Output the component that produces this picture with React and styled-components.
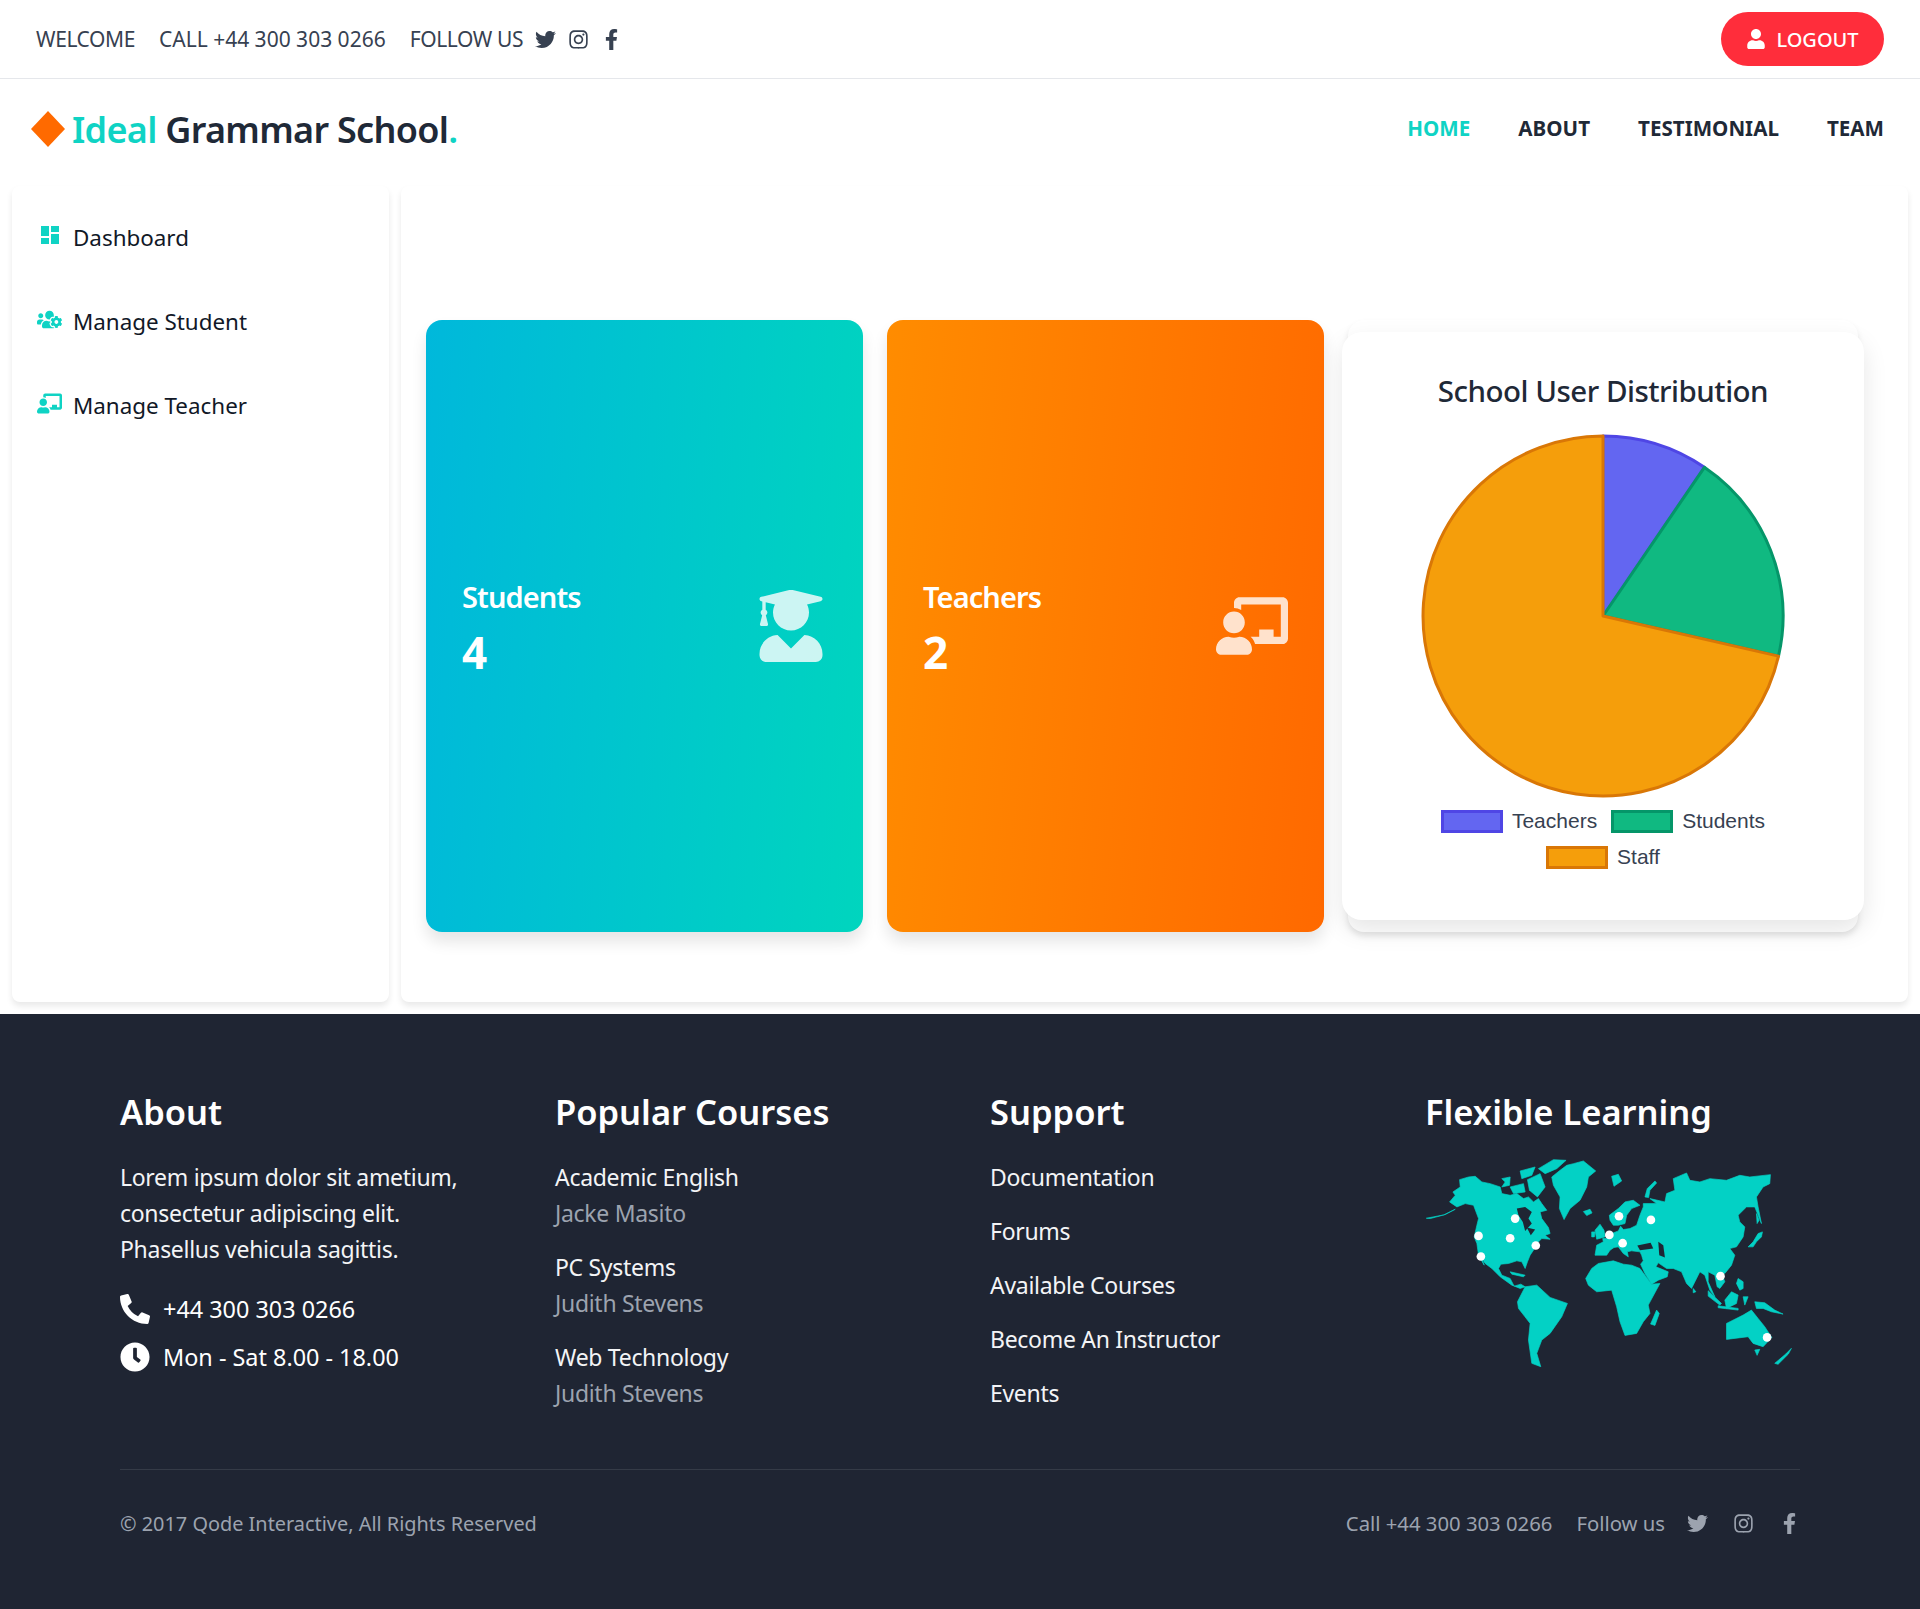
import React from 'react';
import styled, { createGlobalStyle } from 'styled-components';
import { FaTwitter, FaInstagram, FaFacebookF, FaUser, FaUsersCog, FaChalkboardTeacher, FaUserGraduate, FaPhoneAlt, FaClock } from 'react-icons/fa';
import { MdDashboard } from 'react-icons/md';

const teal = '#0fd3c4';
const dark = '#1f2533';
const FONT = `"Noto Sans", "Open Sans", sans-serif`;

const GlobalStyle = createGlobalStyle`
	* { box-sizing: border-box; }
	body { margin: 0; background: #fff; font-family: ${FONT}; color: #1f2937; }
`;

const Page = styled.div`
	width: 1920px;
	height: 1609px;
	overflow: hidden;
`;

const TopBar = styled.div`
	height: 79px;
	border-bottom: 1px solid #e5e7eb;
	padding: 0 36px;
	display: flex;
	align-items: center;
	justify-content: space-between;
`;

const TopLeft = styled.div`
	display: flex;
	align-items: center;
	gap: 24px;
	font-size: 21px;
	color: #374151;
`;

const TopWord = styled.span`
	letter-spacing: -0.4px;
`;

const Follow = styled.div`
	display: flex;
	align-items: center;
	gap: 12px;
	svg { display: block; }
`;

const LogoutButton = styled.button`
	width: 163px;
	height: 54px;
	border: 0;
	border-radius: 27px;
	background: #ff2d3b;
	color: #fff;
	font: 500 20px ${FONT};
	display: flex;
	align-items: center;
	justify-content: center;
	gap: 10px;
`;

const NavBar = styled.div`
	height: 107px;
	padding: 0 36px 5px 31px;
	display: flex;
	align-items: center;
	justify-content: space-between;
`;

const Brand = styled.div`
	display: flex;
	align-items: center;
	gap: 7px;
	margin-top: -2px;
	font-size: 36px;
	font-weight: 600;
	letter-spacing: -0.7px;
	color: #1f2937;
	span { color: ${teal}; }
	svg { margin-top: -1px; }
`;

const NavLinks = styled.nav`
	display: flex;
	gap: 48px;
	margin-top: -4px;
`;

const NavLink = styled.a`
	font-size: 20.6px;
	font-weight: 700;
	color: ${p => (p.$active ? teal : '#1f2937')};
`;

const Dashboard = styled.div`
	padding: 0 12px;
	display: flex;
	gap: 12px;
`;

const Panel = styled.div`
	height: 816px;
	background: #fff;
	border-radius: 8px;
	box-shadow: 0 4px 6px rgba(0, 0, 0, 0.09);
`;

const Sidebar = styled(Panel)`
	width: 377px;
	padding-top: 9px;
`;

const SideItem = styled.div`
	height: 84px;
	padding-left: 25px;
	display: flex;
	align-items: center;
	gap: 11px;
	font-size: 22.4px;
	color: #111827;
`;

const SideIcon = styled.span`
	width: 25px;
	color: ${teal};
	display: flex;
	justify-content: center;
	margin-top: -4px;
`;

const Main = styled(Panel)`
	flex: 1;
	padding: 134px 0 0 25px;
	display: grid;
	grid-template-columns: 437px 437px 510px;
	grid-template-rows: 612px;
	gap: 24px;
`;

const StatCard = styled.div`
	border-radius: 16px;
	padding: 0 36px;
	background: ${p => p.$bg};
	box-shadow: 0 10px 15px rgba(0, 0, 0, 0.1);
	color: #fff;
	display: flex;
	align-items: center;
	justify-content: space-between;
	svg { opacity: 0.8; display: block; }
`;

const StatText = styled.div`
	margin-top: 6.5px;
`;

const StatLabel = styled.div`
	font-size: 29px;
	font-weight: 600;
	letter-spacing: -0.9px;
	line-height: 40px;
`;

const StatValue = styled.div`
	font-size: 44px;
	font-weight: 700;
	line-height: 60px;
	margin-top: 4.5px;
`;

const ChartSlot = styled.div`
	position: relative;
	background: #fff;
	border-radius: 16px;
	box-shadow: 0 4px 6px rgba(0, 0, 0, 0.1);
`;

const ChartCard = styled.div`
	position: absolute;
	top: 12px;
	bottom: 12px;
	left: -6px;
	right: -6px;
	background: #fff;
	border-radius: 20px;
	box-shadow: 0 10px 25px rgba(0, 0, 0, 0.1);
	padding-top: 37px;
	display: flex;
	flex-direction: column;
	align-items: center;
`;

const ChartTitle = styled.h3`
	margin: 0;
	font-size: 29.5px;
	font-weight: 500;
	line-height: 44px;
	letter-spacing: -0.5px;
	color: #1f2937;
`;

const PieSvg = styled.svg`
	display: block;
	margin-top: 20px;
`;

const Legend = styled.div`
	width: 400px;
	margin-top: 4px;
	display: flex;
	flex-wrap: wrap;
	justify-content: center;
	column-gap: 14px;
	font: 21px/36px "Liberation Sans", Arial, sans-serif;
	color: #374151;
`;

const LegendItem = styled.div`
	display: flex;
	align-items: center;
	gap: 9px;
`;

const Swatch = styled.i`
	width: 62px;
	height: 23px;
	background: ${p => p.$fill};
	border: 3px solid ${p => p.$line};
`;

const Footer = styled.footer`
	margin-top: 12px;
	height: 595px;
	background: ${dark};
	padding: 72px 120px 0;
	color: #fff;
`;

const Columns = styled.div`
	display: grid;
	grid-template-columns: repeat(4, 375px);
	gap: 60px;
	height: 384px;
	border-bottom: 1px solid rgba(255, 255, 255, 0.1);
`;

const ColumnTitle = styled.h4`
	margin: 0 0 21px;
	font-size: 34.5px;
	font-weight: 600;
	line-height: 52px;
`;

const Text = styled.div`
	font-size: 23px;
	line-height: 36px;
	letter-spacing: -0.3px;
	color: ${p => (p.$muted ? '#9ca3af' : '#f3f4f6')};
`;

const ContactRow = styled.div`
	display: flex;
	align-items: center;
	gap: 13px;
	height: 48px;
	font-size: 23.4px;
	svg { display: block; }
`;

const Contacts = styled.div`
	margin-top: 18px;
`;

const Course = styled.div`
	margin-bottom: 18px;
`;

const SupportLink = styled(Text)`
	height: 54px;
`;

const MapSvg = styled.svg`
	display: block;
	margin-top: -2px;
`;

const Bottom = styled.div`
	height: 106px;
	display: flex;
	align-items: center;
	justify-content: space-between;
	font-size: 19.9px;
	color: #9ca3af;
`;

const BottomRight = styled.div`
	display: flex;
	align-items: center;
	gap: 24px;
	font-size: 20.3px;
`;

const BottomIcons = styled.div`
	display: flex;
	align-items: center;
	gap: 25px;
	margin-left: -2px;
	svg { display: block; }
`;

const pieSlices = [
	{ d: 'M183 183 L183 3 A180 180 0 0 1 284.4 34.3 Z', fill: '#6366f1', line: '#4f46e5' },
	{ d: 'M183 183 L284.4 34.3 A180 180 0 0 1 358.5 223.1 Z', fill: '#10b981', line: '#059669' },
	{ d: 'M183 183 L358.5 223.1 A180 180 0 1 1 183 3 Z', fill: '#f59e0b', line: '#d97706' }
];

const legendRows = [
	{ label: 'Teachers', fill: '#6366f1', line: '#4f46e5' },
	{ label: 'Students', fill: '#10b981', line: '#059669' },
	{ label: 'Staff', fill: '#f59e0b', line: '#d97706' }
];

const courses = [
	{ name: 'Academic English', by: 'Jacke Masito' },
	{ name: 'PC Systems', by: 'Judith Stevens' },
	{ name: 'Web Technology', by: 'Judith Stevens' }
];

const supportLinks = ['Documentation', 'Forums', 'Available Courses', 'Become An Instructor', 'Events'];

// traced by eye from the footer map, in a 3x coordinate space
const land = [
	'48,234 100,224 135,207 105,223 60,235',
	'118,185 135,165 128,155 150,140 148,118 175,110 195,108 215,125 240,130 270,140 275,160 300,165 320,160 340,175 355,170 370,185 385,175 395,190 410,210 390,215 395,235 415,262 420,280 405,285 420,297 395,295 380,310 370,330 360,345 352,365 345,385 335,365 320,362 295,370 272,372 265,385 275,405 300,415 312,438 332,432 345,440 330,445 305,435 270,410 245,385 225,370 215,355 222,375 205,345 200,310 192,290 200,255 205,235 190,195 165,190 140,200',
	'275,115 300,110 298,135 275,140 285,125',
	'300,140 340,130 345,155 310,160',
	'330,92 375,80 365,105 335,115',
	'352,118 390,100 405,140 382,170 358,150',
	'385,85 430,58 468,60 440,85 405,100',
	'300,395 345,405 340,410 305,402',
	'425,110 450,90 470,75 490,70 520,62 557,92 535,110 530,140 510,180 480,205 462,238 448,205 450,170 430,135',
	'520,214 540,207 546,218 530,226',
	'555,270 570,252 582,270 585,290 560,297',
	'545,275 555,275 553,290 545,290',
	'605,108 625,102 635,122 612,138',
	'705,170 712,145 735,122 740,128 720,150 716,172',
	'600,240 598,225 625,205 645,185 670,180 690,195 665,205 650,225 645,250 625,255 610,255',
	'555,345 560,315 580,305 578,295 598,295 605,280 625,272 632,258 640,268 660,265 680,255 690,225 700,200 700,190 740,190 720,175 765,185 770,160 795,150 790,115 830,98 840,120 870,125 900,115 950,120 990,105 1020,110 1082,103 1080,130 1060,140 1040,170 1045,200 1055,250 1035,200 1010,200 985,225 990,245 1005,260 1000,290 980,320 960,325 975,345 965,375 945,400 935,398 945,425 930,445 922,440 915,405 895,395 895,425 915,470 900,450 885,405 870,395 845,445 830,430 815,395 790,385 770,385 745,368 738,380 775,395 772,410 745,420 725,432 705,400 692,372 700,362 695,345 690,335 665,332 652,335 655,350 640,340 625,320 612,322 600,330 590,345 570,345',
	'527,415 545,385 565,370 610,362 640,372 665,375 690,385 725,432 750,430 715,495 720,520 700,545 680,580 645,586 630,545 620,500 605,450 560,455 535,435',
	'322,485 345,440 380,435 420,472 472,490 455,530 420,580 395,600 380,640 392,680 365,670 355,600 360,550 325,505',
	'950,550 1000,525 1025,510 1045,535 1065,560 1086,592 1060,620 1030,610 1015,590 950,598',
	'722,552 740,510 748,520 735,556',
	'1035,630 1050,628 1042,646',
	'1095,670 1128,642 1145,625 1136,642 1105,673',
	'1015,320 1030,305 1045,280 1058,275 1055,290 1040,305 1030,320',
	'1040,220 1048,240 1042,250',
	'850,445 858,455 850,458',
	'895,452 935,490 930,495 895,468',
	'945,480 965,455 985,465 980,490 950,505',
	'925,497 985,505 985,510 925,503',
	'1000,470 1015,470 1005,495',
	'1035,485 1065,488 1095,510 1120,522 1085,515 1060,505 1040,505',
	'985,415 1000,425 1000,445 990,450 980,430'
];

const water = [
	'320,205 345,200 365,215 355,235 365,250 345,272 338,245 325,225',
	'350,262 375,268 362,285',
	'682,316 722,308 730,325 690,330',
	'745,305 760,315 765,352 748,345'
];

const cities = [[315, 235], [205, 287], [300, 294], [377, 316], [212, 349], [627, 228], [723, 239], [598, 284], [638, 309], [932, 408], [1072, 592]];

const WorldMap = () => (
	<MapSvg width='375' height='213' viewBox='45 50 1125 640'>
		{land.map(points => <polygon key={points} points={points} fill='#03d1c5' stroke='#03d1c5' strokeWidth='2' strokeLinejoin='round' />)}
		{water.map(points => <polygon key={points} points={points} fill={dark} />)}
		{cities.map(([x, y]) => <circle key={x} cx={x} cy={y} r='13' fill='#fff' />)}
	</MapSvg>
);

export default function App() {
	return (
		<Page>
			<GlobalStyle />
			<TopBar>
				<TopLeft>
					<TopWord>WELCOME</TopWord>
					<span>CALL +44 300 303 0266</span>
					<Follow>
						<TopWord>FOLLOW US</TopWord>
						<FaTwitter size={21} />
						<FaInstagram size={21} />
						<FaFacebookF size={21} />
					</Follow>
				</TopLeft>
				<LogoutButton><FaUser size={20} />LOGOUT</LogoutButton>
			</TopBar>
			<NavBar>
				<Brand>
					<svg width='34' height='36' viewBox='0 0 34 36'><polygon points='17,0 34,18 17,36 0,18' fill='#ff6a00' /></svg>
					<div><span>Ideal</span> Grammar School<span>.</span></div>
				</Brand>
				<NavLinks>
					<NavLink $active>HOME</NavLink>
					<NavLink>ABOUT</NavLink>
					<NavLink>TESTIMONIAL</NavLink>
					<NavLink>TEAM</NavLink>
				</NavLinks>
			</NavBar>
			<Dashboard>
				<Sidebar>
					<SideItem><SideIcon><MdDashboard size={24} /></SideIcon>Dashboard</SideItem>
					<SideItem><SideIcon><FaUsersCog size={25} /></SideIcon>Manage Student</SideItem>
					<SideItem><SideIcon><FaChalkboardTeacher size={25} /></SideIcon>Manage Teacher</SideItem>
				</Sidebar>
				<Main>
					<StatCard $bg='linear-gradient(95deg, #00b8db, #00d5be)'>
						<StatText>
							<StatLabel>Students</StatLabel>
							<StatValue>4</StatValue>
						</StatText>
						<FaUserGraduate size={72} />
					</StatCard>
					<StatCard $bg='linear-gradient(95deg, #ff8c00, #ff6900)'>
						<StatText>
							<StatLabel>Teachers</StatLabel>
							<StatValue>2</StatValue>
						</StatText>
						<FaChalkboardTeacher size={72} />
					</StatCard>
					<ChartSlot>
						<ChartCard>
							<ChartTitle>School User Distribution</ChartTitle>
							<PieSvg width='366' height='366' viewBox='0 0 366 366'>
								{pieSlices.map(s => <path key={s.fill} d={s.d} fill={s.fill} stroke={s.line} strokeWidth='3' strokeLinejoin='round' />)}
							</PieSvg>
							<Legend>
								{legendRows.map(r => (
									<LegendItem key={r.label}><Swatch $fill={r.fill} $line={r.line} />{r.label}</LegendItem>
								))}
							</Legend>
						</ChartCard>
					</ChartSlot>
				</Main>
			</Dashboard>
			<Footer>
				<Columns>
					<div>
						<ColumnTitle>About</ColumnTitle>
						<Text>Lorem ipsum dolor sit ametium,<br />consectetur adipiscing elit.<br />Phasellus vehicula sagittis.</Text>
						<Contacts>
							<ContactRow><FaPhoneAlt size={30} />+44 300 303 0266</ContactRow>
							<ContactRow><FaClock size={30} />Mon - Sat 8.00 - 18.00</ContactRow>
						</Contacts>
					</div>
					<div>
						<ColumnTitle>Popular Courses</ColumnTitle>
						{courses.map(c => (
							<Course key={c.name}>
								<Text>{c.name}</Text>
								<Text $muted>{c.by}</Text>
							</Course>
						))}
					</div>
					<div>
						<ColumnTitle>Support</ColumnTitle>
						{supportLinks.map(l => <SupportLink key={l}>{l}</SupportLink>)}
					</div>
					<div>
						<ColumnTitle>Flexible Learning</ColumnTitle>
						<WorldMap />
					</div>
				</Columns>
				<Bottom>
					<div>© 2017 Qode Interactive, All Rights Reserved</div>
					<BottomRight>
						<span>Call +44 300 303 0266</span>
						<span>Follow us</span>
						<BottomIcons>
							<FaTwitter size={21} />
							<FaInstagram size={21} />
							<FaFacebookF size={21} />
						</BottomIcons>
					</BottomRight>
				</Bottom>
			</Footer>
		</Page>
	);
}
